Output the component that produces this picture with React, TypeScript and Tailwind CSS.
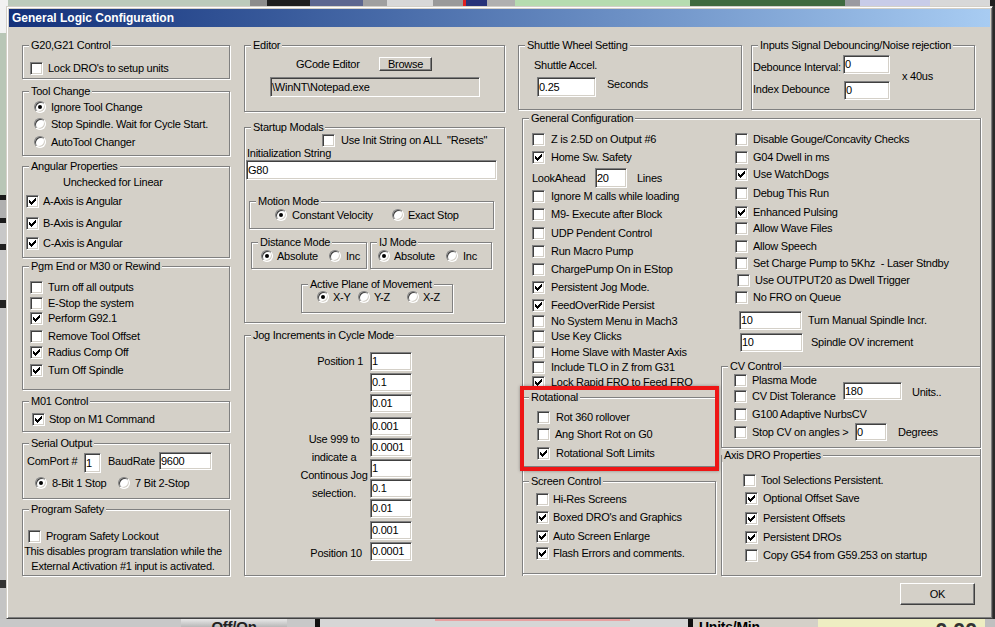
import React from "react";

// classic win2k bevels
const sunken =
  "border border-t-[#808080] border-l-[#808080] border-r-white border-b-white shadow-[inset_1px_1px_0_#404040,inset_-1px_-1px_0_#d4d0c8]";
const etched = "border border-[#808080] shadow-[inset_1px_1px_0_#fff,1px_1px_0_#fff]";

const TICK = ["......X", ".....XX", "X...XXX", "XX.XXX.", "XXXXX..", ".XXX...", "..X...."];

function Tick() {
  return (
    <svg width="7" height="7" viewBox="0 0 7 7" shapeRendering="crispEdges">
      {TICK.flatMap((row, y) =>
        row
          .split("")
          .map((c, x) =>
            c === "X" ? <rect key={x + "-" + y} x={x} y={y} width="1" height="1" fill="#000" /> : null
          )
      )}
    </svg>
  );
}

function Box({ on = false, className = "" }: { on?: boolean; className?: string }) {
  return (
    <span className={`flex h-[13px] w-[13px] shrink-0 items-center justify-center bg-white ${sunken} ${className}`}>
      {on && <Tick />}
    </span>
  );
}

function Check({ label, on = false, className = "" }: { label: string; on?: boolean; className?: string }) {
  return (
    <div className={`flex items-center whitespace-pre ${className}`}>
      <Box on={on} />
      {label}
    </div>
  );
}

function Radio({ label, on = false, className = "" }: { label: string; on?: boolean; className?: string }) {
  return (
    <div className={`flex items-center whitespace-nowrap ${className}`}>
      <span className={`flex h-[12px] w-[12px] shrink-0 items-center justify-center rounded-full bg-white ${sunken}`}>
        {on && <span className="h-[4px] w-[4px] rounded-full bg-black" />}
      </span>
      {label}
    </div>
  );
}

function Field({ value, gray = false, className = "" }: { value: string; gray?: boolean; className?: string }) {
  return (
    <div
      className={`flex shrink-0 items-center overflow-hidden whitespace-nowrap pl-[1px] ${
        gray ? "bg-[#d4d0c8]" : "bg-white"
      } ${sunken} ${className}`}
    >
      {value}
    </div>
  );
}

function Btn({ label, className = "" }: { label: string; className?: string }) {
  return (
    <button
      type="button"
      className={`flex shrink-0 items-center justify-center border border-t-white border-l-white border-r-[#404040] border-b-[#404040] bg-[#d4d0c8] shadow-[inset_-1px_-1px_0_#808080] ${className}`}
    >
      {label}
    </button>
  );
}

function Group({
  label,
  className = "",
  frame = etched,
  lg = "ml-[6px]",
  children,
}: {
  label: string;
  className?: string;
  frame?: string;
  lg?: string;
  children?: React.ReactNode;
}) {
  return (
    <fieldset className={`min-w-0 shrink-0 ${frame} ${className}`}>
      <legend className={`${lg} whitespace-nowrap bg-[#d4d0c8] px-[2px] leading-[13px]`}>{label}</legend>
      {children}
    </fieldset>
  );
}

type Row = [string, boolean, string];

const pgmEnd: Row[] = [
  ["Turn off all outputs", false, "mt-[6px] h-[16px]"],
  ["E-Stop the system", false, "h-[16px]"],
  ["Perform G92.1", true, "h-[14px]"],
  ["Remove Tool Offset", false, "mt-[3px] h-[16px]"],
  ["Radius Comp Off", true, "h-[16px]"],
  ["Turn Off Spindle", true, "mt-[2px] h-[16px]"],
];

const genTop: Row[] = [
  ["Z is 2.5D on Output #6", false, "mt-[6px] h-[16px]"],
  ["Home Sw. Safety", true, "mt-[2px] h-[16px]"],
];

const genLeft: Row[] = [
  ["Ignore M calls while loading", false, "h-[16px]"],
  ["M9- Execute after Block", false, "mt-[2px] h-[16px]"],
  ["UDP Pendent Control", false, "mt-[3px] h-[16px]"],
  ["Run Macro Pump", false, "mt-[2px] h-[16px]"],
  ["ChargePump On in EStop", false, "mt-[2px] h-[16px]"],
  ["Persistent Jog Mode.", true, "mt-[2px] h-[16px]"],
  ["FeedOverRide Persist", true, "mt-[2px] h-[16px]"],
  ["No System Menu in Mach3", false, "h-[16px]"],
  ["Use Key Clicks", false, "h-[15px]"],
  ["Home Slave with Master Axis", false, "h-[16px]"],
  ["Include TLO in Z from G31", false, "h-[15px]"],
  ["Lock Rapid FRO to Feed FRO", true, "h-[15px]"],
];

const genRight: Row[] = [
  ["Disable Gouge/Concavity Checks", false, "mt-[6px] pl-[18px]"],
  ["G04 Dwell in ms", false, "mt-[2px] pl-[18px]"],
  ["Use WatchDogs", true, "mt-[1px] pl-[18px]"],
  ["Debug This Run", false, "mt-[3px] pl-[18px]"],
  ["Enhanced Pulsing", true, "mt-[3px] pl-[18px]"],
  ["Allow Wave Files", false, "pl-[18px]"],
  ["Allow Speech", false, "mt-[2px] pl-[18px]"],
  ["Set Charge Pump to 5Khz  - Laser Stndby", false, "mt-[1px] pl-[18px]"],
  ["Use OUTPUT20 as Dwell Trigger", false, "mt-[1px] pl-[20px]"],
  ["No FRO on Queue", false, "mt-[1px] pl-[18px]"],
];

const axisDro: Row[] = [
  ["Tool Selections Persistent.", false, "mt-[10px] pl-[21px]"],
  ["Optional Offset Save", true, "mt-[2px] pl-[23px]"],
  ["Persistent Offsets", true, "mt-[4px] pl-[23px]"],
  ["Persistent DROs", true, "mt-[3px] pl-[23px]"],
  ["Copy G54 from G59.253 on startup", false, "mt-[2px] pl-[23px]"],
];

const jog: [string, string][] = [
  ["1", "mt-[10px]"],
  ["0.1", "mt-[2px]"],
  ["0.01", "mt-[2px]"],
  ["0.001", "mt-[4px]"],
  ["0.0001", "mt-[2px]"],
  ["1", "mt-[2px]"],
  ["0.1", "mt-[1px]"],
  ["0.01", "mt-[1px]"],
  ["0.001", "mt-[3px]"],
  ["0.0001", "mt-[2px]"],
];

function LeftColumn() {
  return (
    <div className="flex w-[208px] shrink-0 flex-col">
      <Group label="G20,G21 Control" className="mt-[12px] h-[40px]">
        <Check label="Lock DRO's to setup units" className="mt-[8px] h-[16px] gap-[5px] pl-[7px]" />
      </Group>

      <Group label="Tool Change" className="mt-[6px] h-[71px]">
        <Radio label="Ignore Tool Change" on className="h-[18px] gap-[5px] pl-[11px]" />
        <Radio label="Stop Spindle. Wait for Cycle Start." className="h-[16px] gap-[5px] pl-[11px]" />
        <Radio label="AutoTool Changer" className="mt-[2px] h-[16px] gap-[5px] pl-[11px]" />
      </Group>

      <Group label="Angular Properties" className="mt-[4px] h-[98px]">
        <div className="flex h-[18px] items-center pl-[40px]">Unchecked for Linear</div>
        <Check label="A-Axis is Angular" on className="mt-[2px] h-[16px] gap-[4px] pl-[3px]" />
        <Check label="B-Axis is Angular" on className="mt-[6px] h-[16px] gap-[4px] pl-[3px]" />
        <Check label="C-Axis is Angular" on className="mt-[4px] h-[16px] gap-[4px] pl-[3px]" />
      </Group>

      <Group label="Pgm End or M30 or Rewind" className="mt-[2px] h-[130px]">
        {pgmEnd.map(([label, on, cls]) => (
          <Check key={label} label={label} on={on} className={`gap-[5px] pl-[7px] ${cls}`} />
        ))}
      </Group>

      <Group label="M01 Control" className="mt-[5px] h-[37px]">
        <Check label="Stop on M1 Command" on className="mt-[3px] h-[16px] gap-[4px] pl-[9px]" />
      </Group>

      <Group label="Serial Output" className="mt-[5px] h-[62px]">
        <div className="flex h-[24px] items-start pl-[4px]">
          <span className="mt-[4px] w-[57px] whitespace-nowrap leading-[14px]">ComPort #</span>
          <Field value="1" className="mt-[3px] h-[20px] w-[17px]" />
          <span className="ml-[7px] mt-[4px] w-[51px] leading-[14px]">BaudRate</span>
          <Field value="9600" className="mt-[2px] h-[18px] w-[53px]" />
        </div>
        <div className="flex h-[18px] items-center pl-[12px]">
          <Radio label="8-Bit 1 Stop" on className="w-[83px] gap-[5px]" />
          <Radio label="7 Bit 2-Stop" className="gap-[5px]" />
        </div>
      </Group>

      <Group label="Program Safety" className="mt-[4px] h-[73px]">
        <Check label="Program Safety Lockout" className="mt-[12px] h-[16px] gap-[5px] pl-[5px]" />
        <div className="whitespace-nowrap pr-[6px] text-center leading-[15px]">
          <div>This disables program translation while the</div>
          <div>External Activation #1 input is activated.</div>
        </div>
      </Group>
    </div>
  );
}

function MiddleColumn() {
  return (
    <div className="ml-[14px] flex w-[261px] shrink-0 flex-col">
      <Group label="Editor" className="mt-[12px] h-[73px]">
        <div className="mt-[5px] flex h-[14px] items-center pl-[51px]">
          <span className="w-[83px] whitespace-nowrap">GCode Editor</span>
          <Btn label="Browse" className="h-[14px] w-[53px]" />
        </div>
        <Field gray value={"\\WinNT\\Notepad.exe"} className="ml-[25px] mt-[6px] h-[20px] w-[210px]" />
      </Group>

      <Group label="Startup Modals" className="mt-[9px] h-[202px]">
        <Check label={'Use Init String on ALL  "Resets"'} className="h-[12px] gap-[6px] pl-[77px]" />
        <div className="flex h-[14px] items-center pl-[2px]">Initialization String</div>
        <Field value="G80" className="ml-[1px] h-[20px] w-[251px]" />

        <Group label="Motion Mode" className="ml-[4px] mt-[15px] h-[34px] w-[245px]">
          <div className="flex h-[14px] items-center pl-[25px]">
            <Radio label="Constant Velocity" on className="w-[117px] gap-[5px]" />
            <Radio label="Exact Stop" className="gap-[4px]" />
          </div>
        </Group>

        <div className="mt-[7px] flex">
          <Group label="Distance Mode" className="ml-[6px] h-[33px] w-[116px]">
            <div className="flex h-[14px] items-center pl-[9px]">
              <Radio label="Absolute" on className="w-[68px] gap-[4px]" />
              <Radio label="Inc" className="gap-[5px]" />
            </div>
          </Group>
          <Group label="IJ Mode" className="ml-[3px] h-[33px] w-[122px]">
            <div className="flex h-[14px] items-center pl-[7px]">
              <Radio label="Absolute" on className="w-[68px] gap-[4px]" />
              <Radio label="Inc" className="gap-[5px]" />
            </div>
          </Group>
        </div>

        <Group label="Active Plane of Movement" className="ml-[56px] mt-[9px] h-[35px] w-[152px]">
          <div className="flex h-[12px] items-center pl-[15px]">
            <Radio label="X-Y" on className="w-[41px] gap-[4px]" />
            <Radio label="Y-Z" className="w-[49px] gap-[4px]" />
            <Radio label="X-Z" className="gap-[4px]" />
          </div>
        </Group>
      </Group>

      <Group label="Jog Increments in Cycle Mode" className="mt-[6px] h-[247px]">
        <div className="flex">
          <div className="flex w-[125px] flex-col">
            <div className="mt-[10px] flex h-[19px] items-center justify-end pr-[7px]">Position 1</div>
            <div className="mt-[59px] whitespace-nowrap pl-[53px] text-center leading-[18px]">
              <div>Use 999 to</div>
              <div>indicate a</div>
              <div>Continous Jog</div>
              <div>selection.</div>
            </div>
            <div className="mt-[42px] flex h-[18px] items-center justify-end pr-[8px]">Position 10</div>
          </div>
          <div className="flex flex-col">
            {jog.map(([v, cls], i) => (
              <Field key={i} value={v} className={`h-[19px] w-[42px] ${cls}`} />
            ))}
          </div>
        </div>
      </Group>
    </div>
  );
}

function RightColumn() {
  return (
    <div className="ml-[13px] flex w-[463px] shrink-0 flex-col">
      <div className="mt-[12px] flex">
        <Group label="Shuttle Wheel Setting" className="h-[71px] w-[224px]">
          <div className="mt-[6px] pl-[15px] leading-[14px]">Shuttle Accel.</div>
          <div className="mt-[5px] flex items-start">
            <Field value="0.25" className="ml-[18px] h-[20px] w-[59px]" />
            <span className="ml-[11px] leading-[14px]">Seconds</span>
          </div>
        </Group>

        <Group label="Inputs Signal Debouncing/Noise rejection" className="ml-[9px] h-[71px] w-[224px]">
          <div className="flex items-center">
            <div className="flex flex-col">
              <div className="mt-[3px] flex h-[19px] items-end">
                <span className="w-[91px] whitespace-nowrap pl-[1px] leading-[14px]">Debounce Interval:</span>
                <Field value="0" className="h-[19px] w-[47px]" />
              </div>
              <div className="mt-[7px] flex h-[19px] items-start">
                <span className="mt-[1px] w-[92px] whitespace-nowrap pl-[1px] leading-[14px]">Index Debounce</span>
                <Field value="0" className="h-[19px] w-[46px]" />
              </div>
            </div>
            <span className="ml-[12px] whitespace-nowrap">x 40us</span>
          </div>
        </Group>
      </div>

      <Group
        label="General Configuration"
        className="ml-[4px] mt-[2px] h-[464px] w-[459px]"
        frame="border-x border-t border-[#808080] shadow-[inset_1px_1px_0_#fff,1px_0_0_#fff]"
      >
        <div className="flex">
          <div className="flex w-[194px] shrink-0 flex-col">
            {genTop.map(([label, on, cls]) => (
              <Check key={label} label={label} on={on} className={`gap-[6px] pl-[9px] ${cls}`} />
            ))}
            <div className="mt-[3px] flex h-[20px] items-center whitespace-nowrap pl-[9px]">
              <span className="w-[63px]">LookAhead</span>
              <Field value="20" className="h-[20px] w-[32px]" />
              <span className="ml-[10px]">Lines</span>
            </div>
            {genLeft.map(([label, on, cls]) => (
              <Check key={label} label={label} on={on} className={`gap-[6px] pl-[9px] ${cls}`} />
            ))}

            <Group label="Rotational" className="-ml-[1px] mt-[1px] h-[76px] w-[194px]">
              <Check label="Rot 360 rollover" className="mt-[5px] h-[16px] gap-[6px] pl-[14px]" />
              <Check label="Ang Short Rot on G0" className="mt-[1px] h-[16px] gap-[5px] pl-[14px]" />
              <Check label="Rotational Soft Limits" on className="mt-[3px] h-[16px] gap-[6px] pl-[14px]" />
            </Group>

            <Group label="Screen Control" className="-ml-[1px] mt-[8px] h-[99px] w-[194px]">
              <Check label="Hi-Res Screens" className="mt-[3px] h-[16px] gap-[4px] pl-[13px]" />
              <Check label="Boxed DRO's and Graphics" on className="mt-[2px] h-[16px] gap-[4px] pl-[13px]" />
              <Check label="Auto Screen Enlarge" on className="mt-[3px] h-[16px] gap-[4px] pl-[13px]" />
              <Check label="Flash Errors and comments." on className="mt-[1px] h-[16px] gap-[4px] pl-[13px]" />
            </Group>
          </div>

          <div className="flex flex-1 flex-col">
            {genRight.map(([label, on, cls]) => (
              <Check key={label} label={label} on={on} className={`h-[16px] gap-[5px] ${cls}`} />
            ))}
            <div className="mt-[6px] flex h-[19px] items-center whitespace-nowrap">
              <Field value="10" className="ml-[22px] h-[19px] w-[63px]" />
              <span className="ml-[6px]">Turn Manual Spindle Incr.</span>
            </div>
            <div className="mt-[3px] flex h-[19px] items-center whitespace-nowrap">
              <Field value="10" className="ml-[23px] h-[19px] w-[63px]" />
              <span className="ml-[8px]">Spindle OV increment</span>
            </div>

            <Group label="CV Control" className="ml-[4px] mt-[8px] h-[88px] w-[260px]">
              <div className="flex h-[9px] items-start whitespace-nowrap pl-[12px]">
                <Box className="mt-[1px]" />
                <span className="ml-[5px] leading-[14px]">Plasma Mode</span>
              </div>
              <div className="flex h-[18px] items-start whitespace-nowrap pl-[12px]">
                <Box className="mt-[8px]" />
                <span className="ml-[5px] mt-[7px] w-[91px] leading-[14px]">CV Dist Tolerance</span>
                <Field value="180" className="h-[18px] w-[59px]" />
                <span className="ml-[10px] mt-[3px] leading-[14px]">Units..</span>
              </div>
              <Check label="G100 Adaptive NurbsCV" className="mt-[6px] h-[16px] gap-[5px] pl-[12px]" />
              <div className="mt-[1px] flex h-[18px] items-center whitespace-nowrap pl-[12px]">
                <Box />
                <span className="ml-[5px] w-[103px]">Stop CV on angles &gt;</span>
                <Field value="0" className="h-[18px] w-[32px]" />
                <span className="ml-[11px]">Degrees</span>
              </div>
            </Group>

            <Group label="Axis DRO Properties" lg="ml-0" className="ml-[4px] mt-[1px] h-[127px] w-[260px]">
              {axisDro.map(([label, on, cls]) => (
                <Check key={label} label={label} on={on} className={`h-[16px] gap-[5px] ${cls}`} />
              ))}
            </Group>
          </div>
        </div>
      </Group>

      <div className="mt-[7px] flex justify-end pr-[6px]">
        <Btn label="OK" className="h-[22px] w-[75px]" />
      </div>
    </div>
  );
}

function Dialog() {
  return (
    <div className="flex h-[613px] w-[987px] shrink-0 flex-col border border-t-[#d4d0c8] border-l-[#d4d0c8] border-r-[#404040] border-b-[#404040] bg-[#d4d0c8] p-[2px] shadow-[inset_1px_1px_0_#fff,inset_-1px_-1px_0_#808080]">
      <div className="flex h-[18px] shrink-0 items-center bg-linear-to-r from-[#14307a] to-[#a8ccf2] pl-[3px] text-[12px] font-bold tracking-normal text-white">
        General Logic Configuration
      </div>
      <div className="flex items-start pl-[13px]">
        <LeftColumn />
        <MiddleColumn />
        <RightColumn />
      </div>
    </div>
  );
}

// bits of the main Mach3 screen showing around the dialog
const topStrip = [
  "w-[8px] bg-[#f2f2f2]",
  "w-[242px] bg-[#bccabb]",
  "w-[17px] bg-[#8c8c8c]",
  "w-[43px] bg-[#1e1e1e]",
  "w-[53px] bg-[#5d6790]",
  "w-[24px] bg-[#a0a0a0]",
  "w-[46px] bg-[#d8d8d8]",
  "w-[30px] bg-[#9a9a9a]",
  "w-[3px] bg-[#e02020]",
  "w-[21px] bg-[#27337a]",
  "w-[28px] bg-[#b0b0b0]",
  "w-[175px] bg-[#b6dcb0]",
  "w-[155px] bg-[#3f6a3f]",
  "w-[15px] bg-[#9a9aa0]",
  "w-[70px] bg-[#c8cce8]",
  "w-[60px] bg-[#d8d8d8]",
  "w-[5px] bg-[#202020]",
];

const leftStrip = [
  "h-[27px] bg-[#f2f2f2]",
  "h-[162px] bg-[#b8c6b6]",
  "h-[5px] bg-[#1a1a1a]",
  "h-[18px] bg-[#b0b0b0]",
  "h-[5px] bg-[#1a1a1a]",
  "h-[21px] bg-[#c8c8c8]",
  "h-[6px] bg-[#202020]",
  "h-[50px] bg-[#c8c8c8]",
  "h-[8px] bg-[#222222]",
  "h-[272px] bg-[#c4c4c4]",
  "h-[8px] bg-[#333333]",
  "h-[31px] bg-[#c4c4c4]",
];

export default function App() {
  return (
    <div className="relative h-[627px] w-[995px] overflow-hidden bg-[#c4c4c4] font-['Liberation_Sans',Arial,sans-serif] text-[11px] tracking-[-0.25px] text-black">
      <div className="flex h-[6px]">
        {topStrip.map((c, i) => (
          <div key={i} className={`h-full shrink-0 ${c}`} />
        ))}
      </div>

      <div className="flex h-[613px]">
        <div className="flex w-[6px] shrink-0 flex-col">
          {leftStrip.map((c, i) => (
            <div key={i} className={`w-full shrink-0 ${c}`} />
          ))}
        </div>
        <Dialog />
        <div className="w-[2px] shrink-0 bg-[#2a2a2a]" />
      </div>

      <div className="flex h-[8px] overflow-hidden">
        <div className="w-[181px] shrink-0 bg-[#c8c8c8]" />
        <div className="flex w-[106px] shrink-0 justify-center bg-linear-to-b from-[#e8e8e8] to-[#b8b8b8] text-[15px] font-bold leading-[15px] text-[#222]">
          Off/On
        </div>
        <div className="w-[28px] shrink-0 bg-[#c8c8c8]" />
        <div className="w-[5px] shrink-0 bg-[#101010]" />
        <div className="w-[368px] shrink-0 bg-[#d6d6d6]">
          <div className="ml-[115px] h-[2px] w-[195px] bg-[#e8a0a0]" />
        </div>
        <div className="w-[5px] shrink-0 bg-[#101010]" />
        <div className="w-[125px] shrink-0 bg-[#d4d0c8] pl-[6px] text-[14px] font-bold leading-[16px]">Units/Min</div>
        <div className="flex w-[167px] shrink-0 justify-end bg-[#eeeec2] pr-[8px] text-[22px] font-bold leading-[24px] text-[#333]">
          0.00
        </div>
        <div className="w-[10px] shrink-0 bg-[#c0c0c0]" />
      </div>

      {/* red annotation box drawn over the Rotational group */}
      <div className="pointer-events-none absolute left-[520px] top-[386px] h-[85px] w-[199px] border-4 border-[#ee1515] shadow-[0_0_3px_rgba(0,0,0,0.35)]" />
    </div>
  );
}
